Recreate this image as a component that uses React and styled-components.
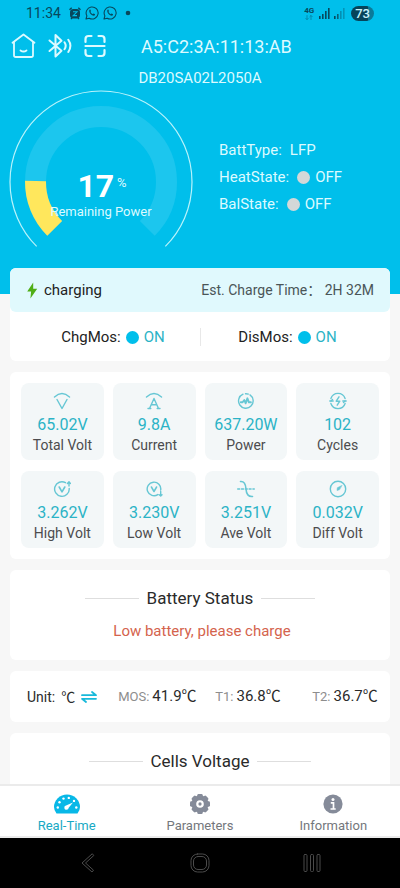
import React from "react";
import styled, { createGlobalStyle } from "styled-components";

const cyan = "#00bfeb";
const teal = "#2bb3c6";
const statusInk = "#07485c";

const GlobalStyle = createGlobalStyle`
  * { box-sizing: border-box; }
  body { margin: 0; background: #f7f7f7; }
  body, button {
    font-family: Roboto, "Noto Sans CJK SC", sans-serif;
    -webkit-font-smoothing: antialiased;
  }
  h1, h2, p, dl, dt, dd { margin: 0; font-weight: 400; }
  svg { display: block; }
`;

const Screen = styled.div`
  display: flex;
  flex-direction: column;
  height: 100vh;
  overflow: hidden;
`;

const Content = styled.main`
  flex: 1;
  min-height: 0;
  overflow: hidden;
`;

const Hero = styled.header`
  background: ${cyan};
  color: #dcfaff;
  padding-bottom: 44px;
`;

const StatusBar = styled.div`
  display: flex;
  align-items: center;
  justify-content: space-between;
  height: 26px;
  padding: 0 26px;
  color: ${statusInk};
`;

const StatusGroup = styled.div`
  display: flex;
  align-items: center;
  gap: 4px;
`;

const Clock = styled.time`
  font-size: 14px;
  line-height: 16px;
  margin-right: 4px;
`;

const Network = styled.span`
  display: flex;
  flex-direction: column;
  align-items: center;
  margin-right: 1px;
  font-size: 8px;
  line-height: 8px;
  font-weight: 700;
`;

const BatteryPill = styled.span`
  margin-left: 2px;
  padding: 0 4px;
  border-radius: 8px;
  background: linear-gradient(90deg, #06445a 73%, #0a7a99 73%);
  color: #c9f3fc;
  font-size: 13px;
  line-height: 15px;
  font-weight: 500;
`;

const TitleRow = styled.div`
  display: flex;
  align-items: center;
  gap: 12px;
  height: 40px;
  padding-left: 11px;
`;

const IconButton = styled.button`
  display: flex;
  border: 0;
  padding: 0;
  background: none;
  color: inherit;
  cursor: pointer;
`;

const Title = styled.h1`
  margin-left: 23px;
  padding-top: 2px;
  font-size: 18px;
  line-height: 24px;
`;

const Model = styled.p`
  padding: 3px 0;
  text-align: center;
  font-size: 15px;
  line-height: 18px;
`;

const HeroBody = styled.div`
  display: flex;
  gap: 26px;
  padding-left: 9px;
`;

const Gauge = styled.div`
  display: grid;
  flex: none;
  width: 184px;

  > * { grid-area: 1 / 1; }
`;

const GaugeText = styled.div`
  align-self: center;
  text-align: center;
  padding-top: 50px;
`;

const Percent = styled.p`
  display: flex;
  justify-content: center;
  padding-left: 2px;
  color: #fff;
  font-size: 32px;
  line-height: 32px;
  font-weight: 700;
`;

const PercentSign = styled.span`
  margin-left: 3px;
  padding-top: 3px;
  color: #dcfaff;
  font-size: 13px;
  line-height: 20px;
  font-weight: 400;
`;

const GaugeLabel = styled.p`
  padding-top: 2px;
  font-size: 13px;
  line-height: 16px;
`;

const States = styled.dl`
  display: flex;
  flex-direction: column;
  gap: 9px;
  padding-top: 51px;
`;

const State = styled.div`
  display: flex;
  align-items: center;
  gap: 8px;
  font-size: 15px;
  line-height: 18px;
`;

const Value = styled.dd`
  display: flex;
  align-items: center;
  gap: 5px;
  color: ${(p) => p.$color || "inherit"};
`;

const Dot = styled.span`
  width: 13px;
  height: 13px;
  border-radius: 50%;
  background: ${(p) => (p.$on ? cyan : "#d4d8d8")};
`;

const Cards = styled.div`
  display: flex;
  flex-direction: column;
  gap: 11px;
  margin-top: -26px;
  padding: 0 10px;
`;

const Card = styled.section`
  border-radius: 6px;
  background: #fff;
`;

const ChargeBanner = styled.div`
  display: flex;
  align-items: center;
  justify-content: space-between;
  height: 44px;
  padding: 0 16px;
  border-radius: 6px;
  background: #e0f9fd;
`;

const Charging = styled.p`
  display: flex;
  align-items: center;
  gap: 5px;
  color: #222;
  font-size: 15px;
  line-height: 20px;
`;

const Estimate = styled.p`
  color: #4a5557;
  font-size: 14px;
  line-height: 20px;
`;

const Switches = styled.dl`
  display: grid;
  grid-template-columns: 1fr 1fr;
  padding: 16px 0 15px;
  color: #222;
  font-size: 15px;
  line-height: 18px;
`;

const Switch = styled.div`
  display: flex;
  justify-content: center;
  gap: 5px;
  padding-left: ${(p) => (p.$first ? 16 : 0)}px;
  padding-right: ${(p) => (p.$first ? 0 : 16)}px;

  & + & { border-left: 1px solid #e8e8e8; }
`;

const Tiles = styled.dl`
  display: grid;
  grid-template-columns: repeat(4, 1fr);
  gap: 11px 9px;
  padding: 11px;
`;

const Tile = styled.div`
  display: flex;
  flex-direction: column-reverse;
  align-items: center;
  padding: 9px 0 5px;
  border-radius: 8px;
  background: #f3f7f8;
`;

const TileLabel = styled.dt`
  color: #4c4c4e;
  font-size: 14px;
  line-height: 20px;
`;

const TileValue = styled.dd`
  display: flex;
  flex-direction: column;
  align-items: center;
  gap: 4px;
  color: ${teal};
  font-size: 16px;
  line-height: 21px;
`;

const SectionTitle = styled.h2`
  display: flex;
  align-items: center;
  justify-content: center;
  gap: 8px;
  padding-top: 16px;
  color: #2a2a2a;
  font-size: 17px;
  line-height: 24px;

  &::before, &::after {
    content: "";
    width: 54px;
    height: 1px;
    background: #dedede;
  }
`;

const Warning = styled.p`
  padding: 11px 0 19px 4px;
  text-align: center;
  color: #d4634d;
  font-size: 15px;
  line-height: 20px;
`;

const Temperatures = styled.div`
  display: flex;
  align-items: center;
  gap: 21px;
  padding: 15px 13px 15px 17px;
  color: #2a2a2a;
  line-height: 20px;
`;

const Unit = styled.div`
  display: flex;
  align-items: center;
  gap: 6px;
  font-size: 14px;
`;

const Readings = styled.dl`
  display: grid;
  flex: 1;
  grid-template-columns: 3fr 3fr 2fr;
`;

const Reading = styled.div`
  display: flex;
  align-items: baseline;
  gap: 3px;
  min-width: 0;
  white-space: nowrap;
`;

const ReadingName = styled.dt`
  color: #8d8d8d;
  font-size: 13px;
`;

const ReadingValue = styled.dd`
  font-size: 15px;
`;

const TabBar = styled.nav`
  display: grid;
  grid-template-columns: repeat(3, 1fr);
  border-top: 2px solid #ebebeb;
  border-bottom: 2px solid #ebebeb;
  background: #fff;
`;

const Tab = styled.button`
  display: flex;
  flex-direction: column;
  align-items: center;
  gap: 3px;
  border: 0;
  padding: 8px 0 1px;
  background: none;
  color: ${(p) => (p.$active ? "#18a9c4" : "#74777c")};
  font-size: 13px;
  line-height: 18px;
  cursor: pointer;
`;

const SystemBar = styled.nav`
  display: grid;
  grid-template-columns: repeat(3, 1fr);
  justify-items: center;
  align-items: center;
  height: 50px;
  padding: 0 32px;
  background: #000;
  color: #4b4b4b;
`;

const strokeProps = {
  fill: "none",
  stroke: "currentColor",
  strokeLinecap: "round",
  strokeLinejoin: "round",
  "aria-hidden": true,
};

const AlarmIcon = () => (
  <svg width="12" height="13" viewBox="0 0 12 13" aria-hidden="true">
    <path d="M0.5 2.8 2.7 .8M11.5 2.8 9.3 .8M2 12l1.3-1.4M10 12l-1.3-1.4" stroke="currentColor" strokeWidth="1.3" />
    <rect x="1" y="2" width="10" height="9.4" rx="3.4" fill="currentColor" />
    <path d="M4 4.8h4L4.2 8.6H8" fill="none" stroke={cyan} strokeWidth="1.1" />
  </svg>
);

const ChatCallIcon = () => (
  <svg width="14" height="14" viewBox="0 0 14 14" {...strokeProps}>
    <path d="M1 13l.9-3.1A6 6 0 1 1 4.2 12.2Z" strokeWidth="1.1" />
    <path d="M4.3 4.3c.2-.8 1-.9 1.2-.3l.4 1c.1.4-.4.7-.5 1 .5 1.1 1.3 1.8 2.4 2.2.4-.1.6-.7 1-.6l1.1.6c.4.3 0 1.2-.8 1.4C6.6 10 3.8 6.8 4.3 4.3Z" fill="currentColor" stroke="none" />
  </svg>
);

const SignalIcon = ({ strong }) => (
  <svg width="11" height="11" viewBox="0 0 11 11" fill="currentColor" aria-hidden="true">
    <rect x="0" y="8" width="1.6" height="3" />
    <rect x="3" y="6" width="1.6" height="5" opacity={strong ? 1 : 0.8} />
    <rect x="6" y="3" width="1.6" height="8" opacity={strong ? 1 : 0.4} />
    <rect x="9" y="0" width="1.6" height="11" opacity={strong ? 1 : 0.35} />
  </svg>
);

const DataArrows = () => (
  <svg width="8" height="5" viewBox="0 0 8 5" {...strokeProps} strokeWidth="0.8" opacity="0.5">
    <path d="M2 .5v4M.8 3.4 2 4.6l1.2-1.2M6 4.6V.5M4.8 1.7 6 .5l1.2 1.2" />
  </svg>
);

const HomeIcon = () => (
  <svg width="25" height="26" viewBox="0 0 25 26" {...strokeProps} strokeWidth="1.8">
    <path d="M1.5 9.8 12.5 1.5l11 8.3" />
    <path d="M3 9v13.2q0 1.8 1.8 1.8h15.4q1.8 0 1.8-1.8V9" />
    <path d="M9.5 17.4q3 2.2 6 0" strokeWidth="1.8" />
  </svg>
);

const BluetoothIcon = () => (
  <svg width="24" height="26" viewBox="0 0 24 26" {...strokeProps} strokeWidth="2">
    <path d="M1.5 7.5 13.5 17.7 7.5 23.5V2l6 5.8L1.5 18" />
    <path d="M16.5 9.3q2.4 3.5 0 7M20.3 6.8q4.2 6 0 12.2" />
  </svg>
);

const ScanIcon = () => (
  <svg width="22" height="24" viewBox="0 0 22 24" {...strokeProps} strokeWidth="2.2">
    <path d="M1.5 8V5q0-3 3-3h3M14.5 2h3q3 0 3 3v3M20.5 16v3q0 3-3 3h-3M7.5 22h-3q-3 0-3-3v-3M1.5 12h19" />
  </svg>
);

const GaugeDial = () => {
  const at = (r, deg) => {
    const a = (deg * Math.PI) / 180;
    return `${92 + r * Math.cos(a)} ${92 + r * Math.sin(a)}`;
  };
  const arc = (r, from, to) =>
    `M${at(r, from)}A${r} ${r} 0 ${to - from > 180 ? 1 : 0} 1 ${at(r, to)}`;
  return (
    <svg width="184" height="160" viewBox="0 0 184 160" fill="none" aria-hidden="true">
      <path d={arc(91, 135, 405)} stroke="#b9f3fb" strokeWidth="1.2" />
      <path d={arc(65.5, 135, 405)} stroke="#1cc6ee" strokeWidth="21" />
      <path d={arc(65.5, 135, 135 + 270 * 0.17)} stroke="#ffe75c" strokeWidth="21" />
    </svg>
  );
};

const BoltIcon = () => (
  <svg width="13" height="17" viewBox="0 0 13 17" aria-hidden="true">
    <path d="M7.2.5 1.2 9.4h3.9L4.4 16.5 11.2 6.700H7.200Z" fill="#4fae16" />
  </svg>
);

const tileIcons = {
  total: <path d="M1.5 5q7.500-7 15 0M4 7.500l5 9 5-9" />,
  current: <path d="M1.500 5q7.500-7 15 0M4.500 16.500 9 6.500 13.500 16.500M3 16.500h2.800M12.200 16.500H15M6.500 12.800h5" />,
  power: (
    <>
      <path d="M6 2.200A7.300 7.300 0 1 0 13 2.900M8.500 1.700q1.500-.1 2.800.4" />
      <path d="M3.800 10.300h1.800l1.700-2.300 1.400 3.300 1.700-5 1.500 4h2" strokeWidth="1.900" />
    </>
  ),
  cycles: (
    <>
      <path d="M1.900 6.500A7.500 7.500 0 0 1 16.100 6.500M1.900 11.500A7.500 7.500 0 0 0 16.100 11.500M.8 9h3.400M13.800 9h3.400" />
      <path d="M2 9 3.500 7.600M16 9l-1.500 1.400M10 4.800 7.200 9.200h3.600L8.200 13.200" />
    </>
  ),
  high: (
    <>
      <path d="M12.500 2.700A7.300 7.300 0 1 0 16.200 8.500M16 6V2.400M14.400 3.400 16 1.800 17.400 3.400" />
      <path d="M6.200 7 9 11.800 11.800 7" strokeWidth="1.600" />
    </>
  ),
  low: (
    <>
      <path d="M12.800 14.600A6.800 6.800 0 1 1 15.700 10M15.700 11.500v4M14.200 14.700l1.500 1.400 1.300-1.400" />
      <path d="M6.400 7 9 11.500 11.600 7" strokeWidth="1.500" />
    </>
  ),
  average: (
    <>
      <path d="M3.500 1.500Q8.500 1 9 9t6.500 7.500" strokeWidth="1.600" />
      <path d="M.7 9h16.600" strokeDasharray="2 1.800" />
    </>
  ),
  difference: (
    <>
      <circle cx="9" cy="9" r="7.700" />
      <path d="M12.800 5.500 8.300 7.700 8 10.500l2.300-.7Z" fill="currentColor" strokeWidth="0.500" />
    </>
  ),
};

const TileIcon = ({ name }) => (
  <svg width="18" height="18" viewBox="0 0 18 18" {...strokeProps} strokeWidth="1.400" opacity="0.700">
    {tileIcons[name]}
  </svg>
);

const SwapIcon = () => (
  <svg width="16" height="12" viewBox="0 0 16 12" {...strokeProps} stroke="#18b9da" strokeWidth="1.800">
    <path d="M1 4.200h14L11 1M15 7.800H1L5 11" />
  </svg>
);

const SpeedIcon = () => (
  <svg width="26" height="20" viewBox="0 0 26 20" aria-hidden="true">
    <path d="M2.500 19.500Q0 16.500 0 13a13 12.500 0 0 1 26 0q0 3.500-2.500 6.500Z" fill="#08b8e7" />
    <g fill="#fff">
      <circle cx="3.800" cy="13.500" r="1.200" />
      <circle cx="5.500" cy="8.300" r="1.200" />
      <circle cx="9.500" cy="4.600" r="1.200" />
      <circle cx="14.800" cy="3.900" r="1.200" />
      <circle cx="20" cy="6.900" r="1.200" />
      <circle cx="22.300" cy="13.500" r="1.200" />
      <path d="M19 8.500 12 11.500a2.200 2.200 0 1 0 2.700 2.300Z" />
    </g>
  </svg>
);

const GearIcon = () => (
  <svg width="22" height="20" viewBox="0 0 22 22" aria-hidden="true">
    <g fill="#858b99">
      <circle cx="11" cy="11" r="9.500" />
      {[0, 45, 90, 135].map((deg) => (
        <rect key={deg} x="8" y="0" width="6" height="22" rx="1.500" transform={`rotate(${deg} 11 11)`} />
      ))}
    </g>
    <circle cx="11" cy="11" r="4.200" fill="#fff" />
    <circle cx="11" cy="11" r="1.800" fill="#858b99" />
  </svg>
);

const InfoIcon = () => (
  <svg width="20" height="20" viewBox="0 0 20 20" aria-hidden="true">
    <circle cx="10" cy="10" r="9.600" fill="#858b99" />
    <circle cx="10" cy="5.500" r="1.500" fill="#fff" />
    <path d="M7.800 8.800h2.700V15M7.500 15h5.200" fill="none" stroke="#fff" strokeWidth="1.700" />
  </svg>
);

const readings = [
  { icon: "total", value: "65.02V", label: "Total Volt" },
  { icon: "current", value: "9.8A", label: "Current" },
  { icon: "power", value: "637.20W", label: "Power" },
  { icon: "cycles", value: "102", label: "Cycles" },
  { icon: "high", value: "3.262V", label: "High Volt" },
  { icon: "low", value: "3.230V", label: "Low Volt" },
  { icon: "average", value: "3.251V", label: "Ave Volt" },
  { icon: "difference", value: "0.032V", label: "Diff Volt" },
];

const temperatures = [
  { name: "MOS:", value: "41.9℃" },
  { name: "T1:", value: "36.8℃" },
  { name: "T2:", value: "36.7℃" },
];

const tabs = [
  { label: "Real-Time", Icon: SpeedIcon, active: true },
  { label: "Parameters", Icon: GearIcon },
  { label: "Information", Icon: InfoIcon },
];

export default function App() {
  return (
    <Screen>
      <GlobalStyle />
      <Content>
        <Hero>
          <StatusBar>
            <StatusGroup>
              <Clock>11:34</Clock>
              <AlarmIcon />
              <ChatCallIcon />
              <ChatCallIcon />
              <svg width="14" height="6" viewBox="0 0 14 6" aria-hidden="true">
                <circle cx="7" cy="3" r="2.300" fill="currentColor" />
              </svg>
            </StatusGroup>
            <StatusGroup>
              <Network>
                4G
                <DataArrows />
              </Network>
              <SignalIcon strong />
              <SignalIcon />
              <BatteryPill>73</BatteryPill>
            </StatusGroup>
          </StatusBar>
          <TitleRow>
            <IconButton aria-label="Home"><HomeIcon /></IconButton>
            <IconButton aria-label="Bluetooth"><BluetoothIcon /></IconButton>
            <IconButton aria-label="Scan"><ScanIcon /></IconButton>
            <Title>A5:C2:3A:11:13:AB</Title>
          </TitleRow>
          <Model>DB20SA02L2050A</Model>
          <HeroBody>
            <Gauge>
              <GaugeDial />
              <GaugeText>
                <Percent>17<PercentSign>%</PercentSign></Percent>
                <GaugeLabel>Remaining Power</GaugeLabel>
              </GaugeText>
            </Gauge>
            <States>
              <State><dt>BattType:</dt><Value>LFP</Value></State>
              <State><dt>HeatState:</dt><Value><Dot />OFF</Value></State>
              <State><dt>BalState:</dt><Value><Dot />OFF</Value></State>
            </States>
          </HeroBody>
        </Hero>

        <Cards>
          <Card>
            <ChargeBanner>
              <Charging><BoltIcon />charging</Charging>
              <Estimate>Est. Charge Time： 2H 32M</Estimate>
            </ChargeBanner>
            <Switches>
              <Switch $first><dt>ChgMos:</dt><Value $color={teal}><Dot $on />ON</Value></Switch>
              <Switch><dt>DisMos:</dt><Value $color={teal}><Dot $on />ON</Value></Switch>
            </Switches>
          </Card>

          <Card>
            <Tiles>
              {readings.map(({ icon, value, label }) => (
                <Tile key={label}>
                  <TileLabel>{label}</TileLabel>
                  <TileValue><TileIcon name={icon} />{value}</TileValue>
                </Tile>
              ))}
            </Tiles>
          </Card>

          <Card>
            <SectionTitle>Battery Status</SectionTitle>
            <Warning>Low battery, please charge</Warning>
          </Card>

          <Card>
            <Temperatures>
              <Unit>
                <span>Unit:</span>
                <span>℃</span>
                <IconButton aria-label="Switch unit"><SwapIcon /></IconButton>
              </Unit>
              <Readings>
                {temperatures.map(({ name, value }) => (
                  <Reading key={name}>
                    <ReadingName>{name}</ReadingName>
                    <ReadingValue>{value}</ReadingValue>
                  </Reading>
                ))}
              </Readings>
            </Temperatures>
          </Card>

          <Card>
            <SectionTitle>Cells Voltage</SectionTitle>
            <Warning />
          </Card>
        </Cards>
      </Content>

      <TabBar>
        {tabs.map(({ label, Icon, active }) => (
          <Tab key={label} $active={active}>
            <Icon />
            {label}
          </Tab>
        ))}
      </TabBar>
      <SystemBar aria-label="System">
        <IconButton aria-label="Back">
          <svg width="14" height="20" viewBox="0 0 14 20" {...strokeProps}>
            <path d="M11 1 1 10l10 9 1.500-1.800L4.500 10l8-7.200Z" />
          </svg>
        </IconButton>
        <IconButton aria-label="Home screen">
          <svg width="20" height="20" viewBox="0 0 20 20" {...strokeProps}>
            <rect x="1" y="1" width="18" height="18" rx="6.500" />
            <rect x="3.500" y="3.500" width="13" height="13" rx="4.500" />
          </svg>
        </IconButton>
        <IconButton aria-label="Recent apps">
          <svg width="18" height="20" viewBox="0 0 18 20" {...strokeProps}>
            <rect x="1" y="1.500" width="3" height="17" rx="1" />
            <rect x="7.500" y="1.500" width="3" height="17" rx="1" />
            <rect x="14" y="1.500" width="3" height="17" rx="1" />
          </svg>
        </IconButton>
      </SystemBar>
    </Screen>
  );
}
